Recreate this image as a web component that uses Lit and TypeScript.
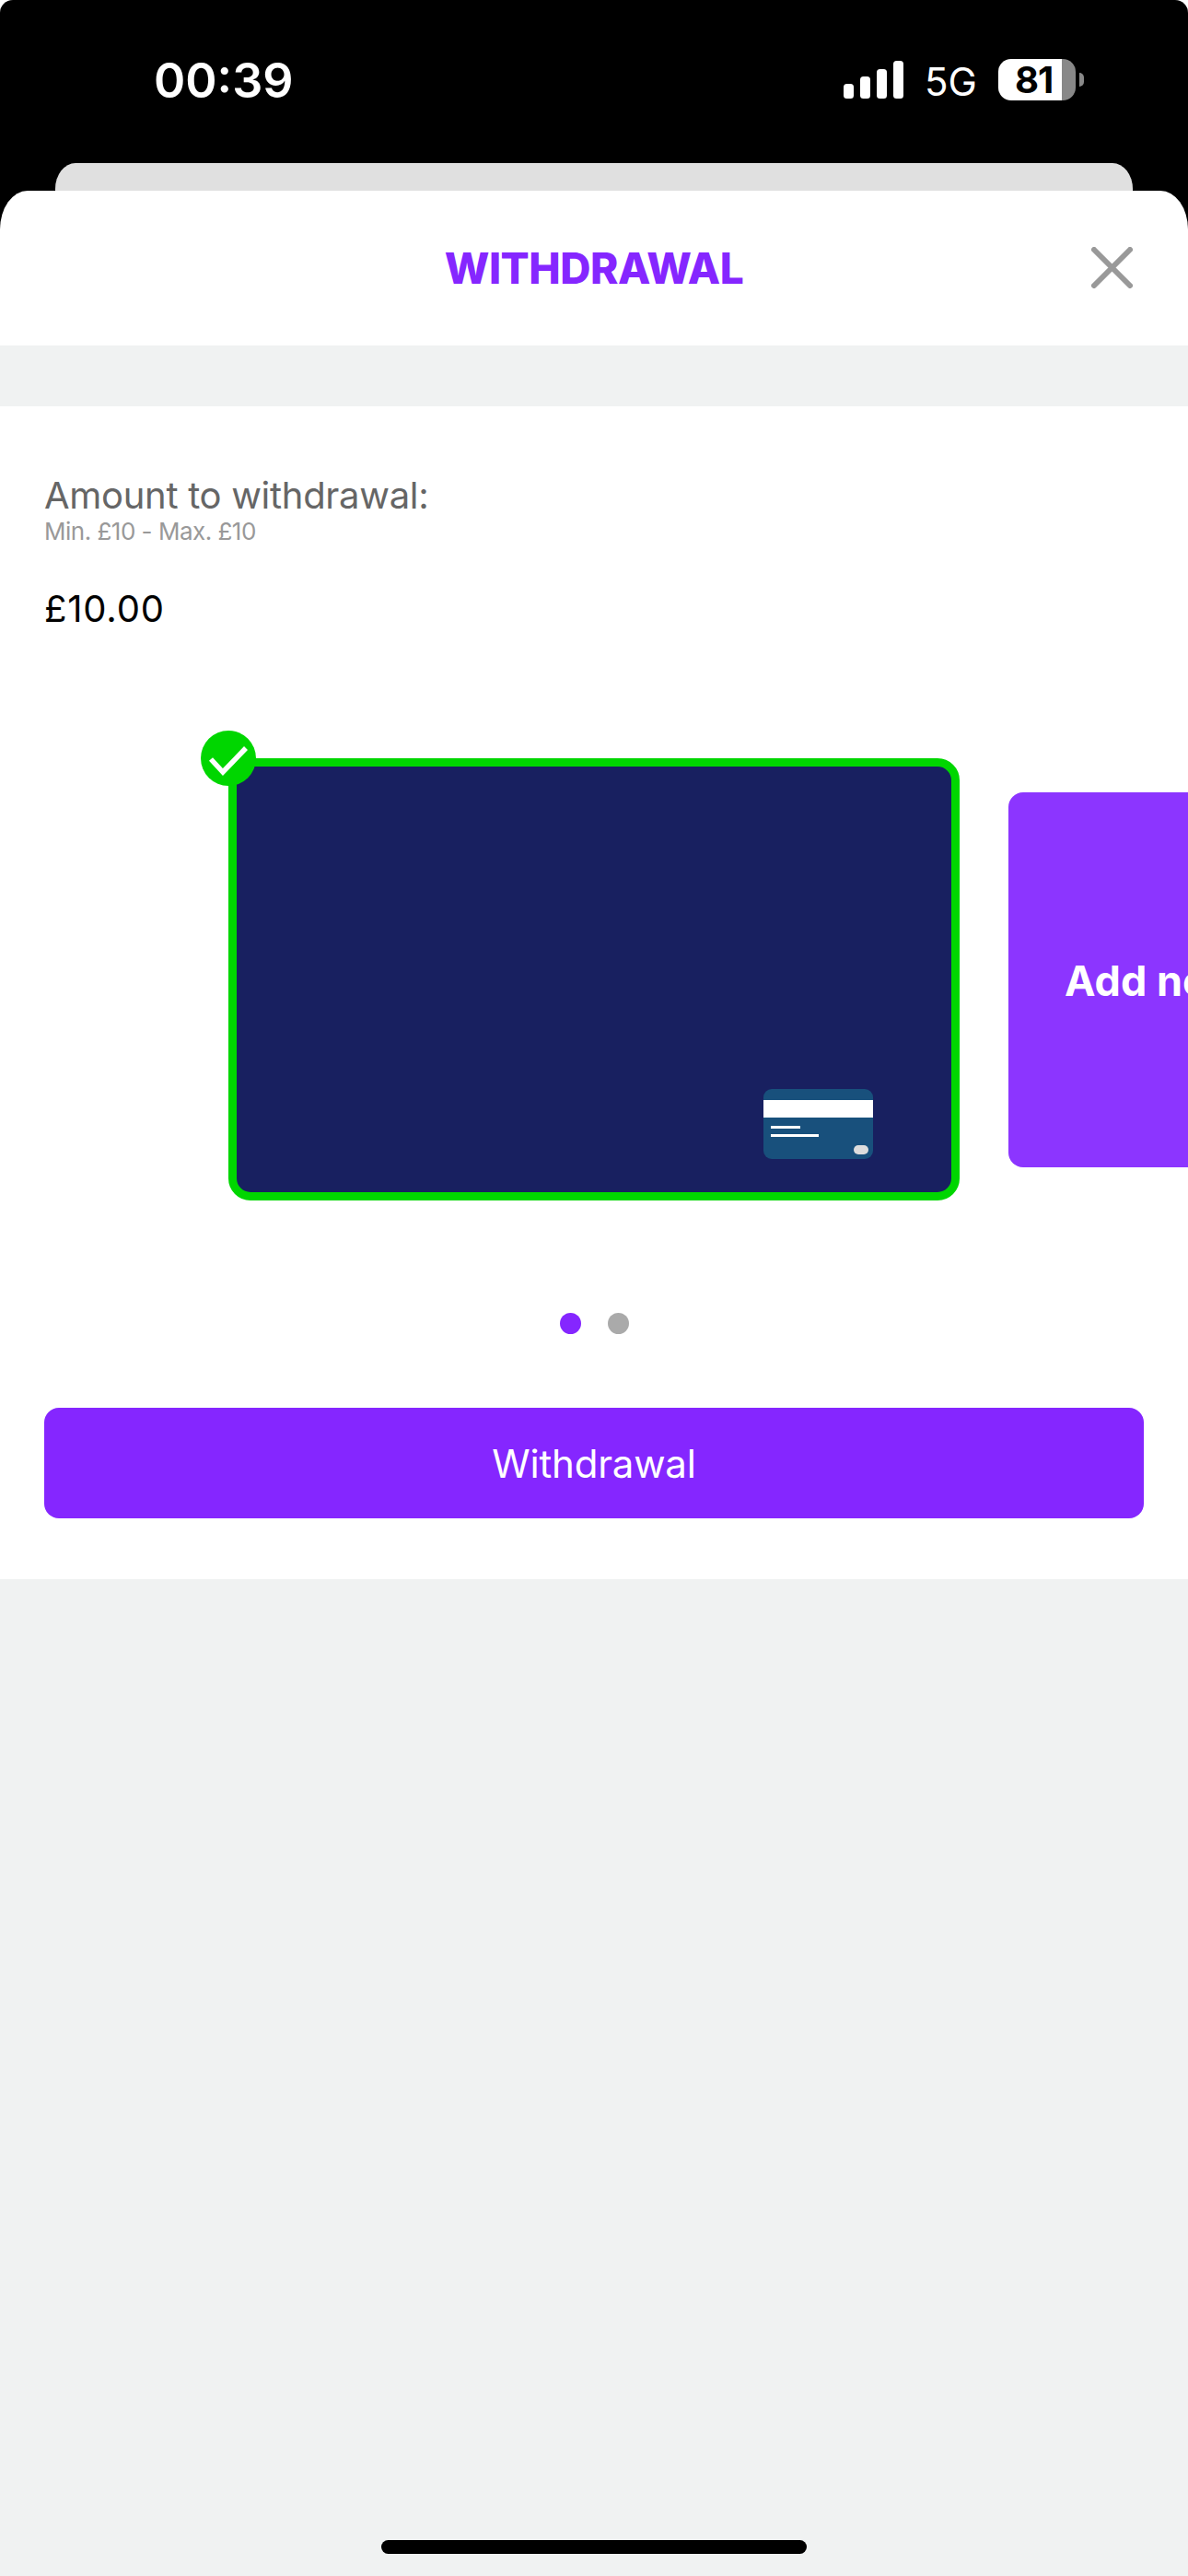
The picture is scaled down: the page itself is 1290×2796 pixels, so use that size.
import { LitElement, html, css } from "lit";
import { customElement } from "lit/decorators.js";

@customElement("app-root")
export class AppRoot extends LitElement {
  static styles = css`
    :host { display: block; width: 1290px; height: 2796px; background: #f0f2f2; font-family: "Inter", "Liberation Sans", sans-serif; overflow: hidden; position: relative; }
    .topwrap { background: #fff; }
    .top { background: #000; height: 177px; border-radius: 14px 14px 0 0; display: flex; justify-content: space-between; box-sizing: border-box; padding: 60px 113px 0 167px; color: #fff; }
    .time { font: 600 52px/56px "Inter", sans-serif; }
    .status { display: flex; align-items: flex-start; gap: 24px; }
    .bars { margin-top: 6px; }
    .net { font: 400 42px/50px "Inter", sans-serif; margin-top: 4px; width: 56px; white-space: nowrap; margin-left: -1px; }
    .batt { display: flex; align-items: center; margin-top: 4px; }
    .batt-body { width: 84px; height: 45px; border-radius: 14px; background: linear-gradient(90deg, #fff 0 82%, #888 82% 100%); color: #000; font: 700 40px/45px "Inter", sans-serif; letter-spacing: -1px; box-sizing: border-box; padding-left: 18px; }
    .batt-tip { width: 5px; height: 15px; background: #888; border-radius: 0 5px 5px 0; margin-left: 4px; }
    .back { background: #000; height: 30px; padding: 0 60px; }
    .back div { height: 30px; background: #e0e0e0; border-radius: 22px 22px 0 0 / 28px 28px 0 0; }
    .blackfill { background: #000; }
    .sheet-head { background: #fff; border-radius: 30px 30px 0 0 / 42px 42px 0 0; height: 168px; position: relative; display: flex; align-items: center; justify-content: center; }
    .title { color: #8526ff; font: 800 46px/1 "Inter", sans-serif; letter-spacing: -0.5px; }
    .close { position: absolute; left: 1185px; top: 61px; }
    .gap { height: 66px; }
    .panel { background: #fff; height: 1273px; box-sizing: border-box; padding: 0 48px; display: flex; flex-direction: column; }
    .label { color: #666; font-size: 40px; line-height: 48px; margin-top: 73px; letter-spacing: -0.3px; }
    .sub { color: #999; font-size: 26px; line-height: 30px; letter-spacing: -0.5px; }
    .amount { color: #000; font-size: 40px; line-height: 48px; margin-top: 45px; letter-spacing: 0.8px; }
    .carousel { display: flex; align-items: center; gap: 53px; margin: 108px -48px 0; padding: 30px 0 0 248px; height: 480px; overflow: hidden; }
    .card { width: 794px; height: 480px; box-sizing: border-box; border: 9px solid #00d600; border-radius: 24px; background: #182060; position: relative; }
    .wrap { position: relative; flex: none; }
    .badge { position: absolute; left: -30px; top: -30px; width: 60px; height: 60px; }
    .mini { position: absolute; left: 572px; top: 350px; }
    .add { flex: none; width: 794px; height: 407px; box-sizing: border-box; padding: 3px 0 0 61px; border-radius: 16px; background: #8c35ff; color: #fff; font-weight: 700; font-size: 45px; display: flex; align-items: center; white-space: nowrap; }
    .dots { display: flex; justify-content: center; gap: 29px; margin-top: 122px; }
    .dot { width: 23px; height: 23px; border-radius: 50%; background: #aaa; }
    .dot.on { background: #8526ff; }
    button { margin-top: 80px; height: 120px; width: 100%; border: 0; border-radius: 16px; background: #8526ff; color: #fff; font: 400 42px "Inter", sans-serif; letter-spacing: -0.2px; }
    .homebar { position: absolute; left: 414px; top: 2757px; width: 462px; height: 15px; border-radius: 8px; background: #000; }
  `;
  render() {
    return html`
      <div class="topwrap"><div class="top">
        <div class="time">00:39</div>
        <div class="status">
          <svg class="bars" width="65" height="41" viewBox="0 0 65 41" fill="#fff">
            <rect x="0" y="25" width="11" height="16" rx="3.5"/><rect x="18" y="17" width="11" height="24" rx="3.5"/><rect x="36" y="9" width="11" height="32" rx="3.5"/><rect x="54" y="0" width="11" height="41" rx="3.5"/>
          </svg>
          <div class="net">5G</div>
          <div class="batt"><div class="batt-body">81</div><div class="batt-tip"></div></div>
        </div>
      </div></div>
      <div class="back"><div></div></div>
      <div class="blackfill"><div class="sheet-head">
        <div class="title">WITHDRAWAL</div>
        <svg class="close" width="45" height="45" viewBox="0 0 45 45" stroke="#999" stroke-width="6" stroke-linecap="round"><path d="M3 3 42 42M42 3 3 42"/></svg>
      </div></div>
      <div class="gap"></div>
      <div class="panel">
        <div class="label">Amount to withdrawal:</div>
        <div class="sub">Min. £10 - Max. £10</div>
        <div class="amount">£10.00</div>
        <div class="carousel">
          <div class="wrap">
            <div class="card">
              <svg class="mini" width="119" height="76" viewBox="0 0 119 76">
                <rect width="119" height="76" rx="9" fill="#18507c"/>
                <rect y="12" width="119" height="19" fill="#fff"/>
                <rect x="8" y="40" width="32" height="3" fill="#fff"/>
                <rect x="8" y="49" width="52" height="3" fill="#fff"/>
                <rect x="98" y="61" width="16" height="10" rx="5" fill="#ddd"/>
              </svg>
            </div>
            <svg class="badge" viewBox="0 0 60 60"><circle cx="30" cy="30" r="30" fill="#00d600"/><path d="M11 31 24 45 49 19" fill="none" stroke="#fff" stroke-width="5.5"/></svg>
          </div>
          <div class="add">Add new card</div>
        </div>
        <div class="dots"><div class="dot on"></div><div class="dot"></div></div>
        <button>Withdrawal</button>
      </div>
      <div class="homebar"></div>
    `;
  }
}
